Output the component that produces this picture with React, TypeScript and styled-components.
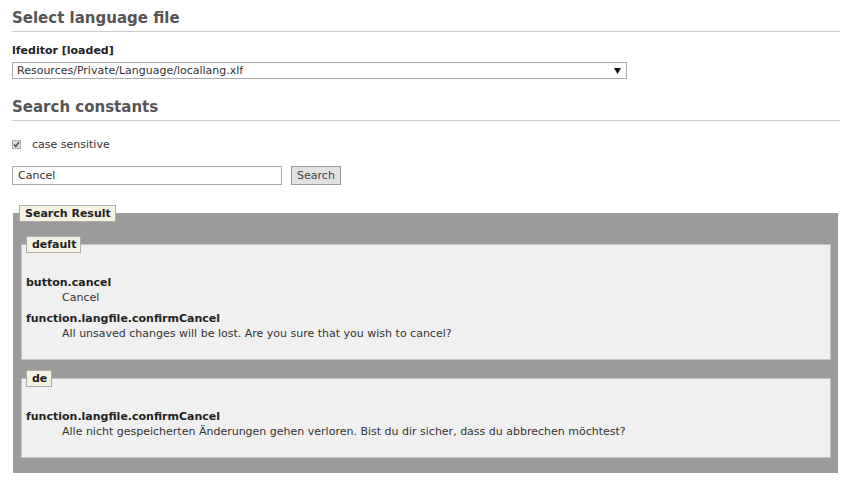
import React from "react";
import styled, { createGlobalStyle } from "styled-components";

const Global = createGlobalStyle`
  html, body { margin: 0; padding: 0; background: #fff; }
  body {
    font-family: "DejaVu Sans", Verdana, sans-serif;
    font-size: 11px;
    color: #333;
  }
`;

const Page = styled.div`
  padding: 0 14px 20px 12px;
`;

const SectionTitle = styled.h2<{ $gap?: number }>`
  margin: ${(p) => p.$gap ?? 0}px 0 0;
  padding: 9px 0 3px;
  font-size: 15px;
  line-height: 19px;
  font-weight: bold;
  color: #555;
  border-bottom: 1px solid #ccc;
`;

const FieldLabel = styled.div`
  margin-top: 11px;
  font-weight: bold;
  line-height: 15px;
  color: #222;
`;

const SelectWrap = styled.div`
  position: relative;
  width: 615px;
  margin-top: 4px;
`;

const Select = styled.select`
  appearance: none;
  -webkit-appearance: none;
  display: block;
  width: 100%;
  height: 17px;
  box-sizing: border-box;
  margin: 0;
  padding: 0 20px 0 4px;
  border: 1px solid #aaa;
  border-radius: 0;
  background: #fff;
  font-family: inherit;
  font-size: 11px;
  line-height: 15px;
  color: #333;
  outline: none;
`;

const SelectArrow = styled.svg`
  position: absolute;
  right: 6px;
  top: 6px;
  pointer-events: none;
`;

const CheckRow = styled.label`
  display: flex;
  align-items: center;
  gap: 11px;
  margin-top: 16px;
  line-height: 15px;
  color: #333;
`;

const CheckBox = styled.span`
  display: inline-flex;
  align-items: center;
  justify-content: center;
  width: 9px;
  height: 9px;
  box-sizing: border-box;
  border: 1px solid #b0b0b0;
  background: #dcdcdc;
`;

const SearchRow = styled.div`
  display: flex;
  align-items: center;
  gap: 9px;
  margin-top: 14px;
`;

const TextInput = styled.input`
  width: 270px;
  height: 19px;
  box-sizing: border-box;
  margin: 0;
  padding: 0 5px;
  border: 1px solid #aaa;
  border-radius: 0;
  font-family: inherit;
  font-size: 11px;
  color: #333;
  outline: none;
`;

const Button = styled.button`
  width: 50px;
  height: 19px;
  box-sizing: border-box;
  margin: 0;
  padding: 0;
  border: 1px solid #999;
  border-radius: 0;
  background: #e1e1e1;
  font-family: inherit;
  font-size: 11px;
  color: #444;
`;

const ResultSet = styled.fieldset`
  margin: 20px 2px 0 1px;
  padding: 0 6px 14px 5px;
  border: 1px solid #9b9b9b;
  background: #9b9b9b;
  min-inline-size: 0;
`;

const Legend = styled.legend`
  margin: 0;
  padding: 1px 4px 1px 5px;
  border: 1px solid #aaa;
  background: #f6f2e2;
  font-weight: bold;
  font-size: 11px;
  line-height: 13px;
  color: #222;
`;

const LangSet = styled.fieldset<{ $top: number }>`
  margin: ${(p) => p.$top}px 0 0 2px;
  padding: 0 4px 12px 4px;
  border: 1px solid #c4c4c4;
  background: #f0f0f0;
  min-inline-size: 0;
`;

const Entries = styled.dl`
  margin: 0;
  padding-top: 22px;
  line-height: 15px;
`;

const Key = styled.dt`
  font-weight: bold;
  color: #222;
`;

const Value = styled.dd`
  margin: 0 0 6px 36px;
  color: #333;
`;

type Entry = { key: string; value: string };
const groups: { lang: string; entries: Entry[] }[] = [
  {
    lang: "default",
    entries: [
      { key: "button.cancel", value: "Cancel" },
      {
        key: "function.langfile.confirmCancel",
        value: "All unsaved changes will be lost. Are you sure that you wish to cancel?",
      },
    ],
  },
  {
    lang: "de",
    entries: [
      {
        key: "function.langfile.confirmCancel",
        value:
          "Alle nicht gespeicherten Änderungen gehen verloren. Bist du dir sicher, dass du abbrechen möchtest?",
      },
    ],
  },
];

export default function App() {
  return (
    <>
      <Global />
      <Page>
        <SectionTitle>Select language file</SectionTitle>
        <FieldLabel>lfeditor [loaded]</FieldLabel>
        <SelectWrap>
          <Select defaultValue="a">
            <option value="a">Resources/Private/Language/locallang.xlf</option>
          </Select>
          <SelectArrow width="7" height="6" viewBox="0 0 7 6">
            <polygon points="0,0 7,0 3.5,6" fill="#111" />
          </SelectArrow>
        </SelectWrap>

        <SectionTitle $gap={10}>Search constants</SectionTitle>
        <CheckRow>
          <CheckBox>
            <svg width="7" height="7" viewBox="0 0 7 7">
              <polyline points="1,3.5 2.8,5.5 6,1.2" fill="none" stroke="#444" strokeWidth="1.4" />
            </svg>
          </CheckBox>
          case sensitive
        </CheckRow>
        <SearchRow>
          <TextInput defaultValue="Cancel" />
          <Button>Search</Button>
        </SearchRow>

        <ResultSet>
          <Legend>Search Result</Legend>
          {groups.map((g, i) => (
            <LangSet key={g.lang} $top={i === 0 ? 14 : 10}>
              <Legend>{g.lang}</Legend>
              <Entries>
                {g.entries.map((e, j) => (
                  <React.Fragment key={j}>
                    <Key>{e.key}</Key>
                    <Value>{e.value}</Value>
                  </React.Fragment>
                ))}
              </Entries>
            </LangSet>
          ))}
        </ResultSet>
      </Page>
    </>
  );
}
